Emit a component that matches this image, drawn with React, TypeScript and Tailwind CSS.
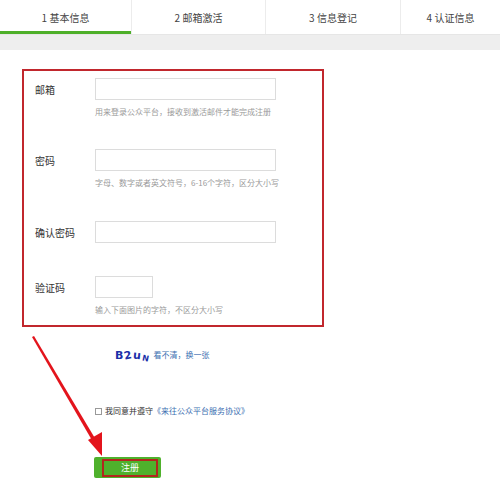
import React from 'react'

const tabs = [
  { label: '1 基本信息', w: 'w-[131px]', active: true },
  { label: '2 邮箱激活', w: 'w-[134px]', active: false },
  { label: '3 信息登记', w: 'w-[135px]', active: false },
  { label: '4 认证信息', w: 'flex-1', active: false },
]

const font = { fontFamily: '"Microsoft YaHei", "Noto Sans CJK SC", sans-serif' }

function Field({
  label,
  hint,
  small,
  className,
}: {
  label: string
  hint?: string
  small?: boolean
  className?: string
}) {
  return (
    <div className={className}>
      <div className="flex items-center">
        <span className="w-[60px] text-[10px] text-[#333]">{label}</span>
        <div
          className={`${small ? 'w-[58px]' : 'w-[181px]'} h-[22px] border border-[#dcdcdc] bg-white`}
        />
      </div>
      {hint && (
        <p className="ml-[60px] mt-[6px] h-[12px] text-[8px] leading-[12px] text-[#9a9a9a]">{hint}</p>
      )}
    </div>
  )
}

export default function App() {
  return (
    <div className="relative w-[500px] h-[479px] overflow-hidden bg-white" style={font}>
      {/* ── Steps ── */}
      <div className="flex h-[35px] border-b border-[#e6e6e6]">
        {tabs.map((t, i) => (
          <div
            key={t.label}
            className={`${t.w} flex items-center justify-center text-[10px] text-[#444] ${
              i > 0 ? 'border-l border-[#ececec]' : ''
            } ${t.active ? 'border-b-[3px] border-b-[#4daf29] pt-[3px]' : ''}`}
          >
            {t.label}
          </div>
        ))}
      </div>
      <div className="h-[15px] bg-[#eeeeee]" />

      {/* ── Form ── */}
      <div className="pl-[22px] pt-[19px]">
        <div className="w-[302px] h-[258px] border-2 border-[#c1272d] pl-[11px] pt-[7px]">
          <Field label="邮箱" hint="用来登录公众平台，接收到激活邮件才能完成注册" />
          <Field
            label="密码"
            hint="字母、数字或者英文符号，6-16个字符，区分大小写"
            className="mt-[31px]"
          />
          <Field label="确认密码" className="mt-[32px]" />
          <Field
            label="验证码"
            hint="输入下面图片的字符，不区分大小写"
            small
            className="mt-[33px]"
          />
        </div>

        <div className="ml-[93px] mt-[20px] flex items-center h-[16px]">
          <span
            className="flex items-end gap-[1px] text-[#1b2fa8] font-bold text-[11px] leading-none"
            style={{ fontFamily: '"DejaVu Sans", sans-serif' }}
          >
            <span>B</span>
            <span className="-rotate-12">2</span>
            <span className="rotate-6">u</span>
            <span className="text-[8px] rotate-12 translate-y-[2px]">N</span>
          </span>
          <span className="ml-[5px] text-[8px] text-[#3c6fb1]">看不清，换一张</span>
        </div>

        <div className="ml-[73px] mt-[42px] flex items-center">
          <span className="w-[7px] h-[7px] border border-[#999] bg-white" />
          <span className="ml-[3px] text-[8px] text-[#333]">我同意并遵守</span>
          <span className="text-[8px] text-[#3c6fb1]">《来往公众平台服务协议》</span>
        </div>

        <div className="ml-[72px] mt-[40px] w-[67px] h-[21px] rounded-[2px] bg-[#4fb12c] flex items-center justify-end pr-[3px]">
          <div className="w-[56px] h-[18px] border-2 border-[#b3261e] flex items-center justify-center text-[9px] text-white">
            注册
          </div>
        </div>
      </div>

      {/* ── Annotation arrow ── */}
      <svg className="absolute left-0 top-0 pointer-events-none" width="500" height="479">
        <polygon points="32,337 34,336 96,440 93,442" fill="#e3141c" />
        <polygon points="88,440 102,432 102,456" fill="#e3141c" />
      </svg>
    </div>
  )
}
